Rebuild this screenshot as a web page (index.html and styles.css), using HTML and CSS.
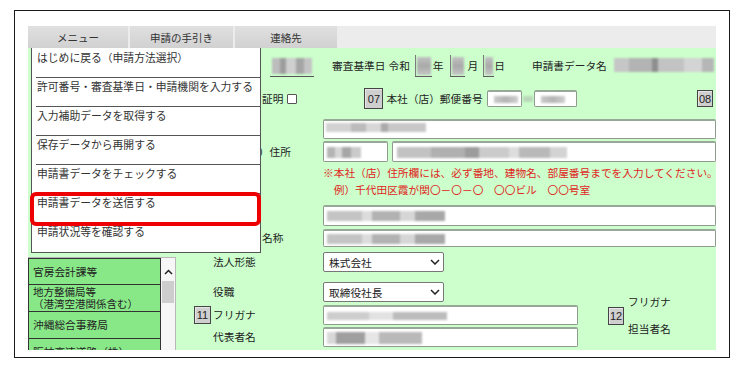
FILE: index.html
```html
<!DOCTYPE html>
<html lang="ja">
<head>
  <meta charset="UTF-8">
  <title>申請書作成</title>
  <link rel="stylesheet" href="styles.css">
</head>
<body>

<div class="frame">
  <nav class="tabs">
    <div class="tab tab-menu">メニュー</div>
    <div class="tab tab-guide">申請の手引き</div>
    <div class="tab tab-contact">連絡先</div>
  </nav>

  <div class="panel">
    <!-- 審査基準日・申請書データ名 -->
    <div class="row row-a">
      <div class="bx bx-no"><span class="mz mz-a"></span></div>
      <span class="lbl lbl-kijun">審査基準日</span>
      <span class="lbl lbl-reiwa">令和</span>
      <div class="bx bx-y"><span class="mz mz-b"></span></div>
      <span class="lbl">年</span>
      <div class="bx bx-m"><span class="mz mz-b"></span></div>
      <span class="lbl">月</span>
      <div class="bx bx-d"><span class="mz mz-b"></span></div>
      <span class="lbl">日</span>
      <span class="lbl lbl-dataname">申請書データ名</span>
      <div class="bx bx-name"><span class="mz mz-c"></span></div>
    </div>

    <!-- 証明・郵便番号 -->
    <div class="row row-b">
      <span class="lbl">証明</span>
      <span class="check"></span>
      <span class="num num-07">07</span>
      <span class="lbl lbl-zip">本社（店）郵便番号</span>
      <div class="inp inp-zip1"><span class="mz mz-d"></span></div>
      <span class="mz mz-dash"></span>
      <div class="inp inp-zip2"><span class="mz mz-d"></span></div>
      <span class="num num-08">08</span>
    </div>

    <div class="row row-c">
      <div class="inp inp-wide inp-kana"><span class="mz mz-e"></span></div>
    </div>

    <div class="row row-d">
      <span class="lbl lbl-addr">本社（店）住所</span>
      <div class="inp inp-pref"><span class="mz mz-f"></span></div>
      <div class="inp inp-addr"><span class="mz mz-g"></span></div>
    </div>

    <p class="notice">※本社（店）住所欄には、必ず番地、建物名、部屋番号までを入力してください。<br>　例）千代田区霞が関〇－〇－〇　〇〇ビル　〇〇号室</p>

    <div class="row row-e">
      <div class="inp inp-wide"><span class="mz mz-h"></span></div>
    </div>

    <div class="row row-f">
      <span class="lbl lbl-name">名称</span>
      <div class="inp inp-wide"><span class="mz mz-h"></span></div>
    </div>

    <div class="lower">
      <div class="list">
        <ul class="list-items">
          <li>官房会計課等</li>
          <li class="two">地方整備局等<br>（港湾空港関係含む）</li>
          <li>沖縄総合事務局</li>
          <li>阪神高速道路（株）</li>
        </ul>
        <div class="scrollbar">
          <svg class="arrow" width="9" height="6" viewBox="0 0 9 6"><path d="M1 5L4.5 1.5 8 5" fill="none" stroke="#222" stroke-width="1.5"/></svg>
          <div class="thumb"></div>
        </div>
      </div>

      <div class="form">
        <div class="frow frow-g">
          <span class="fnum"></span>
          <span class="flabel">法人形態</span>
          <div class="select">株式会社
            <svg width="10" height="6" viewBox="0 0 10 6"><path d="M1 1l4 4 4-4" fill="none" stroke="#222" stroke-width="1.5"/></svg>
          </div>
        </div>
        <div class="frow frow-h">
          <span class="fnum"></span>
          <span class="flabel">役職</span>
          <div class="select">取締役社長
            <svg width="10" height="6" viewBox="0 0 10 6"><path d="M1 1l4 4 4-4" fill="none" stroke="#222" stroke-width="1.5"/></svg>
          </div>
        </div>
        <div class="frow frow-i">
          <span class="fnum"><span class="num">11</span></span>
          <span class="flabel">フリガナ</span>
          <div class="inp inp-rep"><span class="mz mz-i"></span></div>
          <div class="tanto">
            <span class="num">12</span>
            <div class="tanto-labels">
              <span>フリガナ</span>
              <span>担当者名</span>
            </div>
          </div>
        </div>
        <div class="frow frow-j">
          <span class="fnum"></span>
          <span class="flabel">代表者名</span>
          <div class="inp inp-rep"><span class="mz mz-j"></span></div>
        </div>
      </div>
    </div>

    <!-- ドロップダウンメニュー -->
    <ul class="menu">
      <li>はじめに戻る（申請方法選択）</li>
      <li>許可番号・審査基準日・申請機関を入力する</li>
      <li>入力補助データを取得する</li>
      <li>保存データから再開する</li>
      <li>申請書データをチェックする</li>
      <li>申請書データを送信する</li>
      <li>申請状況等を確認する</li>
    </ul>
    <div class="highlight"></div>
  </div>
</div>

</body>
</html>
```

FILE: styles.css
```css
body {
  margin: 0;
  font-family: "Noto Sans CJK JP", sans-serif;
  font-size: 10.7px;
  color: #222;
  background-color: #fff;
}

.frame {
  box-sizing: border-box;
  width: 716px;
  height: 348px;
  margin: 10px 0 0 14px;
  border: 1px solid #1a1a1a;
  padding: 15px 13px 7px 13px;
  overflow: hidden;
}

/* タブ */
.tabs {
  display: flex;
  gap: 2px;
  height: 22px;
  background-color: #ececec;
}

.tab {
  display: flex;
  align-items: center;
  justify-content: center;
  font-size: 10.5px;
  color: #333;
  background: linear-gradient(#e0e0e0, #d1d1d1);
}

.tab-menu { width: 100px; }
.tab-guide { width: 103px; }
.tab-contact { width: 102px; }

/* 緑のパネル */
.panel {
  position: relative;
  height: 302px;
  background-color: #ccffcc;
  overflow: hidden;
}

.row {
  display: flex;
  align-items: center;
}

.lbl {
  line-height: 14px;
  white-space: nowrap;
}

/* ぼかし */
.mz {
  display: block;
  filter: blur(1.1px);
}

.mz-a { height: 16px; margin: 3px 2px; background: linear-gradient(90deg, #bdbdbd 0 20%, #9d9d9d 20% 35%, #cfcfcf 35% 60%, #a5a5a5 60% 80%, #c4c4c4 80%); }
.mz-b { height: 18px; margin: 2px 1px; background: linear-gradient(#c2c2c2, #a9a9a9 50%, #c6c6c6); }
.mz-c { height: 14px; margin: 3px 2px; background: linear-gradient(90deg, #c6c6c6 0 15%, #b3b3b3 15% 38%, #8e8e8e 38% 44%, #c3c3c3 44% 70%, #d4d4d4 70% 88%, #b6b6b6 88%); }
.mz-d { width: 24px; height: 7px; margin-left: 6px; background: linear-gradient(90deg, #c9c9c9, #b4b4b4 50%, #cfcfcf); }
.mz-dash { width: 10px; height: 6px; margin: 0 1px; background: #b8d8b8; }
.mz-e { width: 100px; height: 9px; margin: 2px 0 0 2px; background: linear-gradient(90deg, #d2d2d2 0 25%, #bbb 25% 40%, #d7d7d7 40% 55%, #aaa 55% 62%, #c8c8c8 62%); }
.mz-f { width: 34px; height: 11px; margin-left: 3px; background: linear-gradient(90deg, #b4b4b4 0 25%, #d6d6d6 25% 45%, #a6a6a6 45% 70%, #cacaca 70%); }
.mz-g { width: 170px; height: 11px; margin-left: 4px; background: linear-gradient(90deg, #c2c2c2 0 20%, #b0b0b0 20% 40%, #9c9c9c 40% 48%, #cbcbcb 48% 66%, #ddd 66% 72%, #b9b9b9 72% 90%, #d3d3d3 90%); }
.mz-h { width: 118px; height: 10px; margin-left: 3px; background: linear-gradient(90deg, #c4c4c4 0 30%, #dcdcdc 30% 38%, #b2b2b2 38% 62%, #d6d6d6 62% 75%, #a8a8a8 75%); }
.mz-i { width: 120px; height: 8px; margin-left: 3px; background: linear-gradient(90deg, #cdcdcd 0 35%, #e2e2e2 35% 55%, #bcbcbc 55%); }
.mz-j { width: 95px; height: 12px; margin-left: 3px; background: linear-gradient(90deg, #d8d8d8 0 10%, #9f9f9f 10% 40%, #e6e6e6 40% 55%, #b9b9b9 55%); }

/* 1行目 */
.row-a {
  height: 22px;
  margin-top: 7px;
  padding-left: 242px;
}

.bx {
  height: 22px;
  border-left: 1px solid #777;
  border-bottom: 1px solid #555;
  box-sizing: border-box;
}

.bx-no { width: 44px; border-left: none; }
.lbl-kijun { margin-left: 18px; }
.lbl-reiwa { margin-left: 3px; }
.bx-y { width: 17px; margin: 0 1px 0 5px; }
.bx-m { width: 15px; margin: 0 3px 0 6px; }
.bx-d { width: 11px; margin: 0 0 0 5px; }
.lbl-dataname { margin-left: 27px; }
.bx-name { flex: 1; margin-left: 5px; border: none; }

/* 2行目 */
.row-b {
  height: 21px;
  margin-top: 11px;
  padding-left: 234px;
}

.check {
  width: 10px;
  height: 10px;
  margin-left: 4px;
  box-sizing: border-box;
  border: 1px solid #555;
  border-radius: 1px;
  background-color: #fff;
}

.num {
  display: flex;
  align-items: center;
  justify-content: center;
  box-sizing: border-box;
  width: 17px;
  height: 18px;
  border: 1px solid #444;
  background-color: #cfcfcf;
  box-shadow: inset 1px 1px 0 #e6e6e6;
  font-family: "Liberation Sans", Arial, sans-serif;
  font-size: 11px;
  color: #222;
}

.num-07 { width: 19px; height: 21px; margin-left: 67px; }
.lbl-zip { margin-left: 3px; }
.num-08 { width: 16px; height: 17px; margin-left: auto; margin-right: 3px; }

.inp {
  display: flex;
  flex-direction: column;
  justify-content: center;
  box-sizing: border-box;
  height: 100%;
  background-color: #fff;
  border: 1px solid #8e9a8e;
  border-top: 2px solid #97a897;
  border-radius: 2px;
}

.inp-zip1 { width: 35px; height: 17px; margin-left: 4px; }
.inp-zip2 { width: 43px; height: 17px; }

.row-c {
  height: 20px;
  margin-top: 10px;
  padding-left: 295px;
}

.inp-wide { flex: 1; }
.inp-kana { justify-content: flex-start; }

.row-d {
  height: 21px;
  margin-top: 2px;
  padding-left: 188px;
}

.lbl-addr { width: 107px; }
.inp-pref { width: 65px; }
.inp-addr { flex: 1; margin-left: 4px; }

.notice {
  margin: 2px 0 0;
  padding-left: 295px;
  line-height: 17px;
  color: #e0241c;
  white-space: nowrap;
}

.row-e {
  height: 21px;
  margin-top: 7px;
  padding-left: 295px;
}

.row-f {
  height: 18px;
  margin-top: 3px;
  padding-left: 234px;
}

.lbl-name { width: 61px; }

/* 下段 */
.lower {
  display: flex;
  align-items: flex-start;
  margin-top: 5px;
}

.list {
  display: flex;
  width: 148px;
  height: 100px;
  margin-top: 5px;
  box-sizing: border-box;
  border: 1px solid #b8b8b8;
  border-left: none;
  background-color: #fafafa;
}

.list-items {
  list-style: none;
  margin: 0;
  padding: 0;
  width: 133px;
}

.list-items li {
  box-sizing: border-box;
  height: 27px;
  padding: 0 0 0 4px;
  display: flex;
  align-items: center;
  background-color: #88e888;
  border: 1px solid #333;
  border-top: none;
  line-height: 12px;
  white-space: nowrap;
}

.list-items li.two {
  font-size: 10.5px;
  line-height: 12px;
}

.list-items li:first-child {
  border-top: 1px solid #333;
}

.scrollbar {
  flex: 1;
  display: flex;
  flex-direction: column;
  align-items: center;
  background-color: #f6f6f6;
}

.arrow {
  margin-top: 11px;
}

.thumb {
  width: 12px;
  height: 22px;
  margin-top: 6px;
  background-color: #cdcdcd;
}

.form {
  flex: 1;
  padding-left: 18px;
}

.frow {
  display: flex;
  align-items: center;
  height: 20px;
}

.frow-h { margin-top: 10px; }
.frow-i { margin-top: 3px; }
.frow-j { margin-top: 2px; }

.fnum { width: 19px; }
.flabel { width: 110px; line-height: 14px; }

.select {
  display: flex;
  align-items: center;
  justify-content: space-between;
  box-sizing: border-box;
  width: 121px;
  height: 20px;
  padding: 0 3px 0 5px;
  background-color: #fff;
  border: 1px solid #777;
  border-radius: 2px;
}

.inp-rep { width: 255px; }

.tanto {
  display: flex;
  align-items: center;
  align-self: flex-start;
  margin: -10px 0 0 30px;
}

.tanto .num {
  width: 16px;
  height: 18px;
}

.tanto-labels {
  display: flex;
  flex-direction: column;
  gap: 13px;
  margin-left: 4px;
  line-height: 14px;
}

/* メニュー */
.menu {
  position: absolute;
  left: 3px;
  top: 0;
  width: 230px;
  margin: 0;
  padding: 1px 0 0;
  list-style: none;
  box-sizing: border-box;
  background-color: #fff;
  border: 1px solid #555;
  border-top: none;
}

.menu li {
  height: 29px;
  margin-left: 4px;
  padding: 1px 0 0 1px;
  box-sizing: border-box;
  border-bottom: 1px solid #555;
  line-height: 14px;
  font-size: 10.8px;
  color: #333;
  white-space: nowrap;
}

.menu li:last-child {
  border-bottom: none;
}

.highlight {
  position: absolute;
  left: 2px;
  top: 144px;
  width: 231px;
  height: 34px;
  box-sizing: border-box;
  border: 4px solid #ee0000;
  border-radius: 6px;
}
```
